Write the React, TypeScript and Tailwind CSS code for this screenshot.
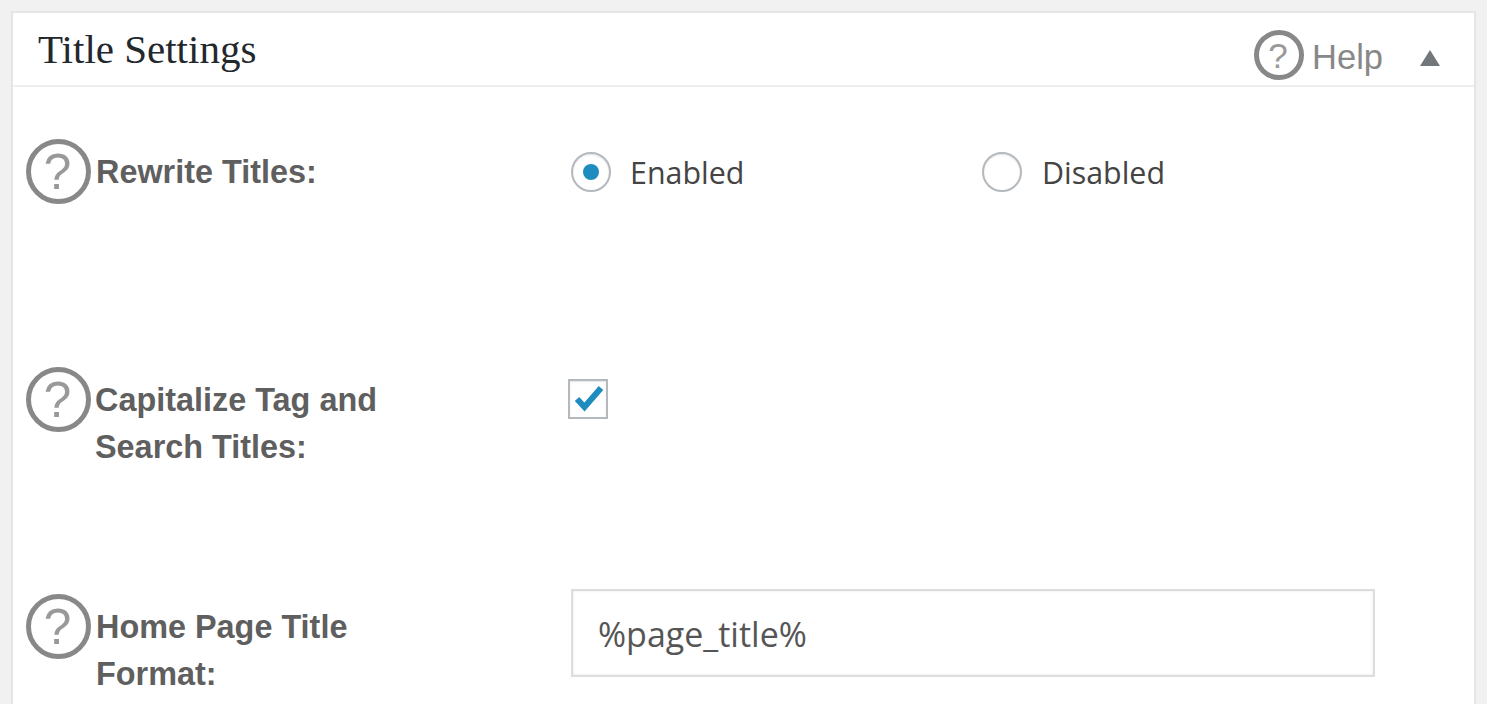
const HelpIcon = ({ size = 'w-[65px] h-[65px]', text = 'text-[50px]' }: { size?: string; text?: string }) => (
  <span className={`${size} ${text} shrink-0 rounded-full border-[5px] border-[#888888] flex items-center justify-center text-[#999999] font-['Liberation_Sans',sans-serif] leading-none`}>
    <span className="-ml-[2px]">?</span>
  </span>
);

const rowLabel = "font-['Liberation_Sans',sans-serif] font-bold text-[32.4px] leading-[47px] text-[#5f5f5f]";

export default function App() {
  return (
    <div className="h-[704px] overflow-hidden bg-[#f1f1f1] pt-[11px] pl-[11px] pr-[11px]">
      <div className="h-[720px] border-2 border-[#e5e5e5] bg-white">
        <div className="h-[74px] border-b-2 border-[#eeeeee] flex items-start justify-between">
          <h2 className="ml-[25px] mt-[12px] font-['Liberation_Serif',serif] text-[41px] leading-[48px] text-[#23282d]">
            Title Settings
          </h2>
          <div className="flex items-start mt-[17px] mr-[34px]">
            <HelpIcon size="w-[50px] h-[50px]" text="text-[35px]" />
            <span className="ml-[8px] mt-[2px] font-['Liberation_Sans',sans-serif] text-[34.5px] leading-[50px] text-[#888888]">Help</span>
            <svg className="ml-[37px] mt-[20px]" width="20" height="16" viewBox="0 0 20 16">
              <path d="M10 0 L20 16 L0 16 Z" fill="#72777c" />
            </svg>
          </div>
        </div>

        <div className="pl-[13px] pt-[52px]">
          <div className="flex h-[228px]">
            <div className="flex w-[545px] items-start">
              <HelpIcon />
              <p className={`${rowLabel} ml-[5px] mt-[10px]`}>Rewrite Titles:</p>
            </div>
            <div className="flex items-start mt-[13px] font-['Open_Sans',sans-serif] text-[30.4px] leading-[42px] text-[#444444]">
              <span className="w-[40px] h-[40px] rounded-full border-2 border-[#b4b9be] bg-white flex items-center justify-center shadow-[inset_0_1px_2px_rgba(0,0,0,0.1)]">
                <span className="w-[16px] h-[16px] rounded-full bg-[#1e8cbe]" />
              </span>
              <span className="ml-[19px] w-[352px]">Enabled</span>
              <span className="w-[40px] h-[40px] rounded-full border-2 border-[#b4b9be] bg-white shadow-[inset_0_1px_2px_rgba(0,0,0,0.1)]" />
              <span className="ml-[20px]">Disabled</span>
            </div>
          </div>

          <div className="flex h-[227px]">
            <div className="flex w-[545px] items-start">
              <HelpIcon />
              <p className={`${rowLabel} ml-[4px] mt-[10px] w-[300px]`}>Capitalize Tag and Search Titles:</p>
            </div>
            <div className="mt-[12px] -ml-[3px] w-[40px] h-[40px] border-2 border-[#b4b9be] bg-white flex items-center justify-center shadow-[inset_0_1px_2px_rgba(0,0,0,0.1)]">
              <svg width="36" height="36" viewBox="0 0 36 36">
                <path d="M7 18 L14.5 26 L31 7" fill="none" stroke="#1e8cbe" strokeWidth="6" />
              </svg>
            </div>
          </div>

          <div className="flex">
            <div className="flex w-[545px] items-start">
              <HelpIcon />
              <p className={`${rowLabel} ml-[5px] mt-[10px] w-[300px]`}>Home Page Title Format:</p>
            </div>
            <div className="-mt-[5px] w-[804px] h-[88px] border-2 border-[#dddddd] bg-white shadow-[inset_0_0_3px_rgba(0,0,0,0.1)] pl-[25px] pt-[2px] flex items-center font-['Open_Sans',sans-serif] text-[34px] text-[#555555]">
              %page_title%
            </div>
          </div>
        </div>
      </div>
    </div>
  );
}
